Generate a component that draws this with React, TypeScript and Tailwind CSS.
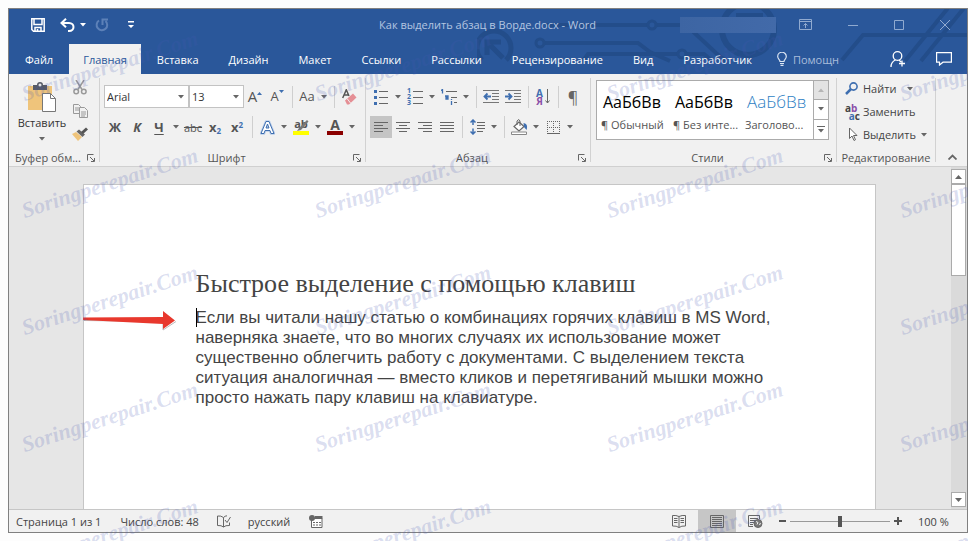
import type { ReactNode } from 'react';

const tabs = ['Файл', 'Главная', 'Вставка', 'Дизайн', 'Макет', 'Ссылки', 'Рассылки', 'Рецензирование', 'Вид', 'Разработчик'];

const styles = [
	{ name: '¶ Обычный', look: 'text-[16px] text-black' },
	{ name: '¶ Без инте...', look: 'text-[16px] text-black' },
	{ name: 'Заголово...', look: 'text-[17px] font-light text-[#2e7fc4]' },
];

const markColumns = [26, 319, 611, 904];
const markRows = [102, 219, 336, 453, 570];

type BtnProps = { label: string; children: ReactNode; active?: boolean };

const Arrow = () => (
	<svg width="6" height="4" viewBox="0 0 6 4" className="shrink-0">
		<path d="M0 0h6L3 3.5z" fill="#666" />
	</svg>
);

const Btn = ({ label, children, active }: BtnProps) => (
	<button
		type="button"
		aria-label={label}
		className={`flex h-[22px] w-[22px] shrink-0 items-center justify-center ${active ? 'bg-[#c5c5c5]' : ''}`}>
		{children}
	</button>
);

const DropBtn = ({ label, children }: BtnProps) => (
	<button type="button" aria-label={label} className="flex h-[22px] w-[34px] shrink-0 items-center">
		<span className="flex w-[22px] justify-center">{children}</span>
		<span className="flex w-3 justify-center">
			<Arrow />
		</span>
	</button>
);

const Sep = () => (
	<span className="flex h-[22px] w-2 shrink-0 justify-center">
		<span className="w-px bg-[#cfcfcf]" />
	</span>
);

const Launcher = ({ label }: { label: string }) => (
	<button type="button" aria-label={label} className="ml-auto">
		<svg width="8" height="8" viewBox="0 0 8 8" fill="none" stroke="#666">
			<path d="M.5 6.500V.5H6.500M3 3l4 4M7.500 4v3.500H4" />
		</svg>
	</button>
);

type GroupProps = { title: string; width: string; launcher?: boolean; children: ReactNode };

const Group = ({ title, width, launcher = true, children }: GroupProps) => (
	<section aria-label={title} className={`flex shrink-0 flex-col ${width}`}>
		<div className="flex h-full">
			<div className="flex min-w-0 flex-1 flex-col">
				<div className="h-[75px]">{children}</div>
				<div className={`flex h-[17px] items-center text-[#555] ${launcher ? 'pr-1' : ''}`}>
					<h2 className="flex-1 whitespace-nowrap text-center">{title}</h2>
					{launcher && <Launcher label={title} />}
				</div>
			</div>
			<div className="my-1 w-px bg-[#d2d2d2]" />
		</div>
	</section>
);

const Combo = ({ label, value, width }: { label: string; value: string; width: string }) => (
	<div className={`relative flex h-[23px] border border-[#c3c3c3] bg-white ${width}`}>
		<select aria-label={label} className="w-full appearance-none bg-white pl-0.5 text-[11px] text-[#333] outline-none">
			<option>{value}</option>
		</select>
		<span className="pointer-events-none absolute top-[9px] right-1">
			<Arrow />
		</span>
	</div>
);

const Circuit = () => (
	<svg className="absolute top-0 right-0" width="490" height="65" viewBox="477 9 490 65" fill="none" stroke="#234d8a" strokeWidth="4">
		<path d="M482 60a17 17 0 1 1 24 0" strokeWidth="5" />
		<path d="M487 55V42h14M488 43l15 15" strokeWidth="5" />
		<path d="M545 25h103M656 25h30l30 28 10 8M545 43h93l12 9 20 9" />
		<path d="M583 61l5-7h90M686 54h18l8 7" />
		<circle cx="540" cy="43" r="4" strokeWidth="3" />
		<circle cx="652" cy="25" r="4" strokeWidth="3" />
		<circle cx="682" cy="54" r="4" strokeWidth="3" />
		<circle cx="748" cy="29" r="26" strokeWidth="6" />
		<path d="M736 15h27M842 60l21-25h104M905 61l43-53M921 61l43-53" />
	</svg>
);

const TitleBar = () => (
	<div className="relative flex h-[35px] items-center pb-1">
		<button type="button" aria-label="Сохранить" className="ml-[22px]">
			<svg width="14" height="14" viewBox="0 0 14 14" fill="none" stroke="#fff" strokeWidth="1.500">
				<path d="M.8.8h12.4v12.4H2.500L.8 11.500zM3 1v5.500h8V1M4 13V9.500h6V13M6.500 11v2" />
			</svg>
		</button>
		<button type="button" aria-label="Отменить" className="ml-[15px] flex items-center gap-[5px]">
			<svg width="15" height="14" viewBox="0 0 15 14" fill="none" stroke="#fff" strokeWidth="2">
				<path d="M6 .8 1.500 5 6 9.200M2 5h7c6 0 6 8 0 8H8" />
			</svg>
			<svg width="6" height="4" viewBox="0 0 6 4"><path d="M0 0h6L3 3.500z" fill="#fff" /></svg>
		</button>
		<button type="button" aria-label="Повторить" className="ml-[9px]">
			<svg width="14" height="14" viewBox="0 0 14 14" fill="none" stroke="#5d81b8" strokeWidth="2">
				<path d="M4 2.500A5.300 5.300 0 1 0 10.500 3M7.500 7V1.500H13" />
			</svg>
		</button>
		<button type="button" aria-label="Настройка панели" className="ml-[19px]">
			<svg width="6" height="8" viewBox="0 0 6 8"><path d="M0 0h6v1.500H0zM0 4h6L3 7z" fill="#fff" /></svg>
		</button>
		<h1 className="flex-1 text-right text-[#b4c6e1]">Как выделить абзац в Ворде.docx - Word</h1>
		<div className="mr-[23px] ml-[84px] h-4 w-24 bg-gradient-to-r from-[#3d65a3] to-[#426aa9]" />
		<div className="flex items-center gap-9 pr-[17px] text-[#90aad0]">
			<button type="button" aria-label="Параметры ленты">
				<svg width="13" height="11" viewBox="0 0 13 11" fill="none" stroke="currentColor">
					<path d="M.5.5h12v10H.5zM.5 2.500h12M6.500 9V4.500M4.500 6.500l2-2 2 2" />
				</svg>
			</button>
			<button type="button" aria-label="Свернуть">
				<svg width="10" height="10" viewBox="0 0 10 10" stroke="currentColor"><path d="M0 5.500h10" /></svg>
			</button>
			<button type="button" aria-label="Развернуть">
				<svg width="10" height="10" viewBox="0 0 10 10" fill="none" stroke="currentColor"><path d="M.5.5h9v9h-9z" /></svg>
			</button>
			<button type="button" aria-label="Закрыть">
				<svg width="10" height="10" viewBox="0 0 10 10" stroke="currentColor"><path d="M0 0l10 10M10 0 0 10" /></svg>
			</button>
		</div>
	</div>
);

const TabBar = () => (
	<nav className="relative flex h-[30px] items-center gap-0.5 pl-0.5 text-white">
		{tabs.map((tab) => (
			<button
				key={tab}
				type="button"
				className={`h-full px-[14px] ${tab === 'Главная' ? 'bg-[#f1f1f1] text-[#2a579a]' : ''}`}>
				{tab}
			</button>
		))}
		<div className="ml-[9px] flex items-center gap-1.5">
			<svg width="10" height="14" viewBox="0 0 10 14" fill="none" stroke="#dbe5f3" strokeWidth="1.200">
				<path d="M3 9.500C3 7.500.7 7 .7 4.500a4.300 4.300 0 0 1 8.600 0C9.300 7 7 7.500 7 9.500zM3 11.500h4M3.500 13.300h3" />
			</svg>
			<input aria-label="Помощник" placeholder="Помощн" className="h-5 w-[60px] bg-transparent outline-none placeholder:text-[#a9bddb]" />
		</div>
		<div className="ml-auto flex items-center gap-[30px] pr-[15px]">
			<button type="button" aria-label="Общий доступ">
				<svg width="16" height="17" viewBox="0 0 16 17" fill="none" stroke="#fff" strokeWidth="1.300">
					<circle cx="7.500" cy="5" r="4.300" />
					<path d="M1 16c0-4 2-6 4.500-7M9 9l2 2M12 9.500v6M9 12.500h6" />
				</svg>
			</button>
			<button type="button" aria-label="Примечания">
				<svg width="16" height="14" viewBox="0 0 16 14" fill="none" stroke="#fff" strokeWidth="1.200">
					<path d="M.6.6h14.800v9.600H7L3.500 13v-2.800H.6z" />
				</svg>
			</button>
		</div>
	</nav>
);

const ClipboardGroup = () => (
	<Group title="Буфер обм..." width="w-[91px]">
		<div className="flex pt-0.5">
			<button type="button" className="mt-1.5 ml-[7px] flex w-[52px] flex-col items-center text-[#333]">
				<svg width="28" height="31" viewBox="0 0 28 31">
					<path d="M0 4h24v24H0z" fill="#efc47b" />
					<path d="M5 3h4a3 3 0 0 1 6 0h4v5H5z" fill="#555a66" />
					<circle cx="12" cy="3" r="1.500" fill="#e8e8e8" />
					<path d="M14.500 11.500h8l5 5v13h-13z" fill="#fff" stroke="#777" />
					<path d="M22.500 11.500v5h5" fill="none" stroke="#777" />
				</svg>
				<span className="leading-[20px]">Вставить</span>
				<svg width="6" height="4" viewBox="0 0 6 4" className="mt-1"><path d="M0 0h6L3 3.500z" fill="#666" /></svg>
			</button>
			<div className="flex w-[24px] flex-col items-center">
				<button type="button" aria-label="Вырезать" className="flex h-[23px] items-center">
					<svg width="14" height="15" viewBox="0 0 14 15" fill="none" stroke="#999" strokeWidth="1.500">
						<path d="M3 0l6 9.500M11 0 5 9.500" />
						<circle cx="3.200" cy="11.500" r="2.300" />
						<circle cx="10.800" cy="11.500" r="2.300" />
					</svg>
				</button>
				<button type="button" aria-label="Копировать" className="flex h-[23px] items-center">
					<svg width="15" height="14" viewBox="0 0 15 14" fill="#f1f1f1" stroke="#999">
						<path d="M.5.5h5l2 2v7h-7zM2 4h4M2 6h4" />
						<path d="M6.500 3.500h5l3 3v7h-8zM8 8h5M8 10h5M8 12h4" />
					</svg>
				</button>
				<button type="button" aria-label="Формат по образцу" className="flex h-[23px] items-center">
					<svg width="16" height="14" viewBox="0 0 16 14">
						<path d="M0 7l4-2 6 5-4 4z" fill="#efc47b" />
						<path d="M4.500 4.500 7 2.500l6 5-2.500 2.500z" fill="#666" />
						<path d="M9 5l5-4.500 2 2-5 4.500z" fill="#555" />
					</svg>
				</button>
			</div>
		</div>
	</Group>
);

const FontGroup = () => (
	<Group title="Шрифт" width="w-[266px]">
		<div className="flex flex-col gap-2 pt-[11px] pl-1 text-[#555]">
			<div className="flex h-[23px] items-center">
				<Combo label="Шрифт" value="Arial" width="w-[85px]" />
				<Combo label="Размер" value="13" width="w-[55px]" />
				<Btn label="Увеличить размер">
					<span className="flex items-end text-[15px] leading-none">A<svg width="5" height="12" viewBox="0 0 5 12"><path d="M0 3h5L2.500 0z" fill="#3f6fb0" /></svg></span>
				</Btn>
				<Btn label="Уменьшить размер">
					<span className="flex items-end text-[13px] leading-none">A<svg width="5" height="13" viewBox="0 0 5 13"><path d="M0 0h5L2.500 3z" fill="#3f6fb0" /></svg></span>
				</Btn>
				<Sep />
				<DropBtn label="Регистр"><span className="text-[13px]">Aa</span></DropBtn>
				<Sep />
				<Btn label="Очистить формат">
					<svg width="15" height="16" viewBox="0 0 15 16">
						<path d="M.7 9 4.300.8 7 7M2 6h4" fill="none" stroke="#555" strokeWidth="1.500" />
						<path d="M3 11.500 11 4.500l3.500 4L7 15.500H5z" fill="#e58f95" />
						<path d="M5 9.500l3.500 4.500" stroke="#f1f1f1" />
					</svg>
				</Btn>
			</div>
			<div className="flex items-center">
				<Btn label="Полужирный"><b className="text-[13px]">Ж</b></Btn>
				<Btn label="Курсив"><b className="text-[13px] italic">К</b></Btn>
				<DropBtn label="Подчеркнутый"><b className="text-[13px] underline underline-offset-2">Ч</b></DropBtn>
				<Btn label="Зачеркнутый"><s className="text-[11px]">abc</s></Btn>
				<Btn label="Подстрочный"><b className="text-[13px]">x<sub className="text-[8px] text-[#3f6fb0]">2</sub></b></Btn>
				<Btn label="Надстрочный"><b className="text-[13px]">x<sup className="text-[8px] text-[#3f6fb0]">2</sup></b></Btn>
				<Sep />
				<DropBtn label="Эффекты">
					<svg width="15" height="15" viewBox="0 0 15 15" strokeLinejoin="round">
						<path d="M1 13.500 6 1.500h3l5 12h-3L10 10.500H5l-1 3zM6 8h3L7.500 4z" fill="#fff" stroke="#b9cde9" strokeWidth="2.500" />
						<path d="M1 13.500 6 1.500h3l5 12h-3L10 10.500H5l-1 3zM6 8h3L7.500 4z" fill="#fff" stroke="#3f6fb0" />
					</svg>
				</DropBtn>
				<DropBtn label="Цвет выделения">
					<span className="relative flex h-4 w-4 flex-col justify-between text-[11px] font-bold leading-[9px]">
						ab
						<svg className="absolute top-0 left-1" width="12" height="12" viewBox="0 0 12 12"><path d="M2 9 10 1l1.500 1.500L4 11 0 12z" fill="#777" /></svg>
						<span className="h-1 bg-[#ffff00]" />
					</span>
				</DropBtn>
				<DropBtn label="Цвет текста">
					<span className="flex h-4 w-4 flex-col items-center justify-between text-[14px] font-bold leading-[11px]">
						A
						<span className="h-1 w-4 bg-[#8b0000]" />
					</span>
				</DropBtn>
			</div>
		</div>
	</Group>
);

const Lines = ({ d }: { d: string }) => (
	<svg width="16" height="14" viewBox="0 0 16 14" fill="none" stroke="#666"><path d={d} /></svg>
);

const ParagraphGroup = () => (
	<Group title="Абзац" width="w-[225px]">
		<div className="flex flex-col gap-2 pt-[11px] pl-1">
			<div className="flex h-[23px] items-center">
				<DropBtn label="Маркеры">
					<svg width="15" height="16" viewBox="0 0 15 16">
						<path d="M5 2.500h9M5 8.500h9M5 14.500h9" stroke="#666" />
						<path d="M0 1h3v3H0zM0 7h3v3H0zM0 13h3v3H0z" fill="#3f6fb0" />
					</svg>
				</DropBtn>
				<DropBtn label="Нумерация">
					<span className="flex gap-0.5 text-[7px] font-bold leading-[6px] text-[#3f6fb0]">
						<span>1<br />2<br />3</span>
						<svg width="10" height="18" viewBox="0 0 10 18" stroke="#666"><path d="M0 3.500h10M0 9.500h10M0 15.500h10" /></svg>
					</span>
				</DropBtn>
				<DropBtn label="Многоуровневый список">
					<svg width="17" height="16" viewBox="0 0 17 16" fill="none">
						<path d="M5 2.500h11M10 8.500h6M13 13.500h3" stroke="#666" />
						<path d="M0 1.500 1.500.5V4.500M4 7h3v3H5V8.500h2M10.500 12v4M10.500 10v1" stroke="#3f6fb0" strokeWidth="1.300" />
					</svg>
				</DropBtn>
				<Sep />
				<Btn label="Уменьшить отступ">
					<svg width="16" height="13" viewBox="0 0 16 13" fill="none">
						<path d="M0 .5h16M9 3.500h7M9 6.500h7M9 9.500h7M0 12.500h16" stroke="#777" />
						<path d="M8 6.500H1.500M4.500 3.500l-3 3 3 3" stroke="#3f6fb0" strokeWidth="1.800" />
					</svg>
				</Btn>
				<Btn label="Увеличить отступ">
					<svg width="16" height="13" viewBox="0 0 16 13" fill="none">
						<path d="M0 .5h16M9 3.500h7M9 6.500h7M9 9.500h7M0 12.500h16" stroke="#777" />
						<path d="M0 6.500h6.500M3.500 3.500l3 3-3 3" stroke="#3f6fb0" strokeWidth="1.800" />
					</svg>
				</Btn>
				<Sep />
				<Btn label="Сортировка">
					<span className="flex items-center gap-0.5 text-[10px] font-bold leading-[8px]">
						<span><span className="text-[#3f6fb0]">А</span><br /><span className="text-[#8a4fa8]">Я</span></span>
						<svg width="5" height="15" viewBox="0 0 5 15" fill="none" stroke="#666"><path d="M2.500 0v14M.5 11.500l2 2.500 2-2.500" /></svg>
					</span>
				</Btn>
				<Sep />
				<Btn label="Отобразить все знаки"><span className="text-[16px] leading-none text-[#666]">¶</span></Btn>
			</div>
			<div className="flex items-center">
				<Btn label="По левому краю" active><Lines d="M1 2.500h14M1 5.500h9M1 8.500h14M1 11.500h9" /></Btn>
				<Btn label="По центру"><Lines d="M1 2.500h14M4 5.500h8M1 8.500h14M4 11.500h8" /></Btn>
				<Btn label="По правому краю"><Lines d="M1 2.500h14M6 5.500h9M1 8.500h14M6 11.500h9" /></Btn>
				<Btn label="По ширине"><Lines d="M1 2.500h14M1 5.500h14M1 8.500h14M1 11.500h14" /></Btn>
				<Sep />
				<DropBtn label="Интервал">
					<svg width="15" height="16" viewBox="0 0 15 16" fill="none">
						<path d="M7 3.500h8M7 6.500h8M7 9.500h8M7 12.500h6" stroke="#666" />
						<path d="M3 1v5M3 9.500v5.500M.5 3.500 3 1l2.500 2.500M.5 12.500 3 15l2.500-2.500" stroke="#3f6fb0" strokeWidth="1.500" />
					</svg>
				</DropBtn>
				<Sep />
				<DropBtn label="Заливка">
					<svg width="17" height="16" viewBox="0 0 17 16" fill="none">
						<path d="M8 3l5 4.500-5 4.500-5-4.500z" fill="#fff" stroke="#666" strokeWidth="1.200" />
						<path d="M6 6V2q2-3 3 0v5" stroke="#666" />
						<path d="M12.500 4q5 1 3 7l-2.500-3z" fill="#3f6fb0" />
						<path d="M.5 13h15v2.500H.5z" fill="#fff" stroke="#888" />
					</svg>
				</DropBtn>
				<DropBtn label="Границы">
					<svg width="13" height="13" viewBox="0 0 13 13" fill="none" stroke="#666">
						<path d="M.5 0v12M6.500 0v12M12.500 0v12M0 .5h13M0 6.500h13" strokeDasharray="1 1" />
						<path d="M0 12.500h13" />
					</svg>
				</DropBtn>
			</div>
		</div>
	</Group>
);

const StylesGroup = () => (
	<Group title="Стили" width="w-[246px]">
		<div className="pt-1.5 pr-[7px] pl-[5px]">
			<div className="flex h-[60px] border border-[#ababab] bg-white">
				{styles.map((s) => (
					<button key={s.name} type="button" className="flex w-[72px] flex-col items-start overflow-hidden pt-[10px] pl-1">
						<span className={`pl-0.5 leading-[22px] ${s.look}`}>АаБбВв</span>
						<span className="mt-1 whitespace-nowrap text-[#555]">{s.name}</span>
					</button>
				))}
				<div className="grid w-[15px] grid-rows-3 divide-y divide-[#ababab] border-l border-[#ababab]">
					<button type="button" aria-label="Вверх" className="flex items-center justify-center bg-[#e3e3e3]">
						<svg width="6" height="4" viewBox="0 0 6 4"><path d="M0 4h6L3 .5z" fill="#b5b5b5" /></svg>
					</button>
					<button type="button" aria-label="Вниз" className="flex items-center justify-center"><Arrow /></button>
					<button type="button" aria-label="Все стили" className="flex items-center justify-center">
						<svg width="8" height="7" viewBox="0 0 8 7"><path d="M0 0h8v1H0zM1 3h6L4 6.500z" fill="#666" /></svg>
					</button>
				</div>
			</div>
		</div>
	</Group>
);

const EditingGroup = () => (
	<Group title="Редактирование" width="w-[99px]" launcher={false}>
		<div className="flex flex-col pt-[3px] pl-2 text-[#444]">
			<button type="button" className="flex h-[23px] items-center gap-[5px]">
				<svg width="13" height="13" viewBox="0 0 13 13" fill="none" stroke="#3f6fb0">
					<circle cx="8.500" cy="4.500" r="3.600" strokeWidth="1.600" />
					<path d="M6 7l-5 5" strokeWidth="2.500" />
				</svg>
				Найти
				<span className="ml-1.5"><Arrow /></span>
			</button>
			<button type="button" className="flex h-[23px] items-center gap-[3px]">
				<span className="w-[15px] text-right text-[10px] font-bold leading-[8px]">
					<span className="block text-left">a<span className="text-[#8a4fa8]">b</span></span>
					<span className="block"><span className="text-[#3f6fb0]">a</span>c</span>
				</span>
				Заменить
			</button>
			<button type="button" className="flex h-[23px] items-center gap-[5px]">
				<svg width="13" height="15" viewBox="0 0 13 15" fill="#fff" stroke="#666"><path d="M4.500 1v10.500l2.500-2.500 2 4.500 1.500-.8L8.500 8.500H12z" /></svg>
				<span>Выделить</span>
				<Arrow />
			</button>
		</div>
	</Group>
);

const Ribbon = () => (
	<div className="flex h-[93px] border-b border-[#d0d0d0] bg-[#f1f1f1]">
		<ClipboardGroup />
		<FontGroup />
		<ParagraphGroup />
		<StylesGroup />
		<EditingGroup />
		<button type="button" aria-label="Свернуть ленту" className="ml-auto flex w-[30px] items-end justify-center pb-1.5">
			<svg width="9" height="6" viewBox="0 0 9 6" fill="none" stroke="#666" strokeWidth="1.800"><path d="M.5 5.500l4-4 4 4" /></svg>
		</button>
	</div>
);

const Document = () => (
	<main className="flex flex-1 bg-[#e6e6e6]">
		<div className="flex flex-1 justify-center pt-[17px] pr-0.5">
			<article className="relative w-full max-w-[793px] border border-b-0 border-[#c6c6c6] bg-white pt-[83px] pl-28 text-[#444]">
				<svg className="absolute top-[124px] -left-px" width="94" height="24" viewBox="0 0 94 24">
					<path d="M1 11.500l79 1V21l13-8.500" fill="none" stroke="#bbb" />
					<path d="M0 8.500 80 8V2l12 9.500L80 20v-5L0 11z" fill="#e8382d" />
				</svg>
				<h2 className="font-['Liberation_Serif',serif] text-[26px] leading-[32px]">Быстрое выделение с помощью клавиш</h2>
				<p className="mt-2 font-['Liberation_Sans',sans-serif] text-[17px] leading-[20px]">
					<span className="absolute h-[19px] w-px bg-black" />
					Если вы читали нашу статью о комбинациях горячих клавиш в MS Word,
					<br />
					наверняка знаете, что во многих случаях их использование может
					<br />
					существенно облегчить работу с документами. С выделением текста
					<br />
					ситуация аналогичная — вместо кликов и перетягиваний мышки можно
					<br />
					просто нажать пару клавиш на клавиатуре.
				</p>
			</article>
		</div>
		<div className="flex w-4 flex-col bg-[#dadada] pt-0.5 pb-0.5">
			<button type="button" aria-label="Прокрутить вверх" className="flex h-[15px] w-[15px] items-center justify-center border border-[#ababab] bg-white">
				<svg width="7" height="4" viewBox="0 0 7 4"><path d="M0 4h7L3.500 0z" fill="#666" /></svg>
			</button>
			<div className="h-[92px] w-[15px] border border-[#ababab] bg-white" />
			<button type="button" aria-label="Прокрутить вниз" className="mt-auto flex h-[15px] w-[15px] items-center justify-center border border-[#ababab] bg-white">
				<svg width="7" height="4" viewBox="0 0 7 4"><path d="M0 0h7L3.500 4z" fill="#666" /></svg>
			</button>
		</div>
	</main>
);

const StatusBar = () => (
	<footer className="flex h-[23px] items-center border-t border-[#c6c6c6] bg-[#f1f1f1] pl-[7px] text-[#444]">
		<span>Страница 1 из 1</span>
		<span className="ml-[19px]">Число слов: 48</span>
		<button type="button" aria-label="Правописание" className="ml-[18px]">
			<svg width="14" height="13" viewBox="0 0 14 13" fill="none" stroke="#666">
				<path d="M6.500 2.500Q4 .5.5 1v9.500q4-.3 6 1.500zM6.500 2.500Q8 .8 10 .8M6.500 12q2-1.800 6-1.500V7.500M8 5l2 2.500L13.500 2" />
			</svg>
		</button>
		<button type="button" className="ml-[17px]">русский</button>
		<button type="button" aria-label="Макрос" className="ml-[19px]">
			<svg width="14" height="13" viewBox="0 0 14 13">
				<path d="M2.500 3.500h10.500v9H2.500z" fill="#fff" stroke="#666" />
				<path d="M6 1h7.500v3H6z" fill="#666" />
				<circle cx="3" cy="3" r="3" fill="#666" />
				<path d="M4 7.500h8M4 10h8" stroke="#666" strokeDasharray="2 1" />
			</svg>
		</button>
		<div className="ml-auto flex h-full items-center">
			<button type="button" aria-label="Режим чтения" className="mr-3">
				<svg width="14" height="13" viewBox="0 0 14 13" fill="none" stroke="#666">
					<path d="M7 1.500Q4 0 .5.500v10.500q4-.3 6.500 1.500 2.500-1.800 6.500-1.500V.5Q10 0 7 1.500v11M2 3.500h3.500M2 5.500h3.500M2 7.500h3.500M8.500 3.500H12M8.500 5.500H12M8.500 7.500H12" />
				</svg>
			</button>
			<button type="button" aria-label="Разметка страницы" className="flex h-full w-[38px] items-center justify-center bg-[#c6c6c6]">
				<svg width="14" height="13" viewBox="0 0 14 13" fill="none" stroke="#666"><path d="M.5.5h13v12H.5zM2 2.500h10M2 4.500h10M2 6.500h10M2 8.500h10M2 10.500h10" /></svg>
			</button>
			<button type="button" aria-label="Веб-документ" className="ml-3">
				<svg width="15" height="13" viewBox="0 0 15 13" fill="none" stroke="#666">
					<path d="M5 11.500H.5V.5h11V4M2 3.500h8M2 5.500h5M2 7.500h4M2 9.500h3" />
					<circle cx="10" cy="8.500" r="4" fill="#777" />
					<path d="M8 6.500l2 1-1 2M11.500 10l1-2" stroke="#f1f1f1" />
				</svg>
			</button>
			<button type="button" aria-label="Уменьшить масштаб" className="ml-4">
				<svg width="7" height="8" viewBox="0 0 7 8"><path d="M0 3h7v2H0z" fill="#555" /></svg>
			</button>
			<input
				type="range"
				aria-label="Масштаб"
				min="0"
				max="100"
				defaultValue="50"
				className="mx-1 h-[11px] w-[100px] appearance-none bg-[linear-gradient(#999,#999)] bg-[length:100%_1px] bg-center bg-no-repeat [&::-webkit-slider-thumb]:h-[11px] [&::-webkit-slider-thumb]:w-1 [&::-webkit-slider-thumb]:appearance-none [&::-webkit-slider-thumb]:bg-[#555]"
			/>
			<button type="button" aria-label="Увеличить масштаб">
				<svg width="8" height="8" viewBox="0 0 8 8"><path d="M0 3h8v2H0zM3 0h2v8H3z" fill="#555" /></svg>
			</button>
			<span className="w-[65px] pl-4">100 %</span>
		</div>
	</footer>
);

const Watermark = () => (
	<div className="pointer-events-none absolute inset-0 overflow-hidden select-none" aria-hidden="true">
		{markRows.map((y) =>
			markColumns.map((x) => (
				<span
					key={`${x}-${y}`}
					style={{ left: x, top: y - 20 }}
					className="absolute origin-bottom-left -rotate-18 font-['Liberation_Serif',serif] text-[22px] leading-[24px] font-bold whitespace-nowrap text-[#4658b4]/20 italic">
					Soringperepair.Com
				</span>
			))
		)}
	</div>
);

const App = () => (
	<div className="relative flex min-h-screen flex-col overflow-hidden bg-[#fdfdfd] py-2 pl-2 font-['Open_Sans','Noto_Sans',sans-serif] text-[11px] leading-[15px]">
		<div className="flex flex-1 flex-col border border-[#808080]">
			<header className="relative bg-[#2a579a]">
				<Circuit />
				<TitleBar />
				<TabBar />
			</header>
			<Ribbon />
			<Document />
			<StatusBar />
		</div>
		<Watermark />
	</div>
);

export default App;
